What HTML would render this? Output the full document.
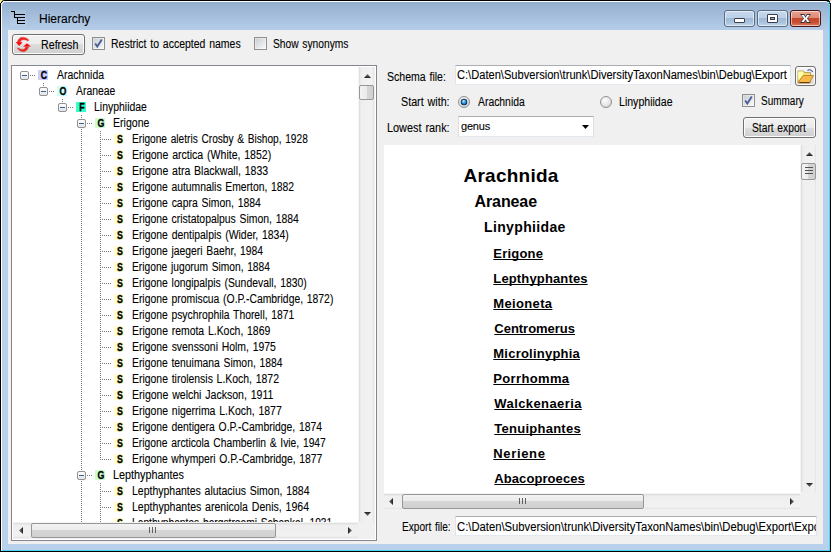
<!DOCTYPE html><html><head><meta charset="utf-8"><style>
*{margin:0;padding:0;box-sizing:border-box}
html,body{width:831px;height:552px;overflow:hidden;background:#000}
body{position:relative;font-family:"Liberation Sans", sans-serif;}
.a{position:absolute}
.t{position:absolute;white-space:pre;font-family:"Liberation Sans", sans-serif;color:#000;-webkit-text-stroke:0.1px #000}
.btn{position:absolute;border:1px solid #707070;border-radius:3px;background:linear-gradient(#f2f2f2 0%,#ebebeb 50%,#dddddd 50%,#cfcfcf 100%);box-shadow:inset 0 0 0 1px #fcfcfc}
.cb{position:absolute;width:13px;height:13px;border:1px solid #8e8f8f;background:linear-gradient(135deg,#dcdcdc,#fdfdfd)}
.cb i{position:absolute;left:1px;top:1px;width:9px;height:9px;background:linear-gradient(135deg,#cbcfd5,#f6f6f6);}
.tb{position:absolute;background:#fff;border:1px solid #e2e3ea;border-top-color:#abadb3;border-bottom-color:#e3e9ef}
.sbv{position:absolute;background:linear-gradient(90deg,#f4f4f4 0,#f4f4f4 1px,#e0e0e0 1px,#e0e0e0 2px,#e9e9e9 2px,#e9e9e9 3px,#efefef 3px,#f1f1f1 calc(100% - 3px),#e9e9e9 calc(100% - 2px),#e4e4e4 calc(100% - 1px),#f0f0f0 calc(100% - 1px))}
.sbh{position:absolute;background:linear-gradient(#f4f4f4 0,#f4f4f4 1px,#e0e0e0 1px,#e0e0e0 2px,#e9e9e9 2px,#e9e9e9 3px,#efefef 3px,#f1f1f1 calc(100% - 3px),#e9e9e9 calc(100% - 2px),#e4e4e4 calc(100% - 1px),#f0f0f0 calc(100% - 1px))}
.thv{position:absolute;border:1px solid #979797;border-radius:2px;background:linear-gradient(90deg,#f2f2f2,#ebebeb 50%,#d6d6d6 50%,#d0d0d0)}
.thh{position:absolute;border:1px solid #979797;border-radius:2px;background:linear-gradient(#f2f2f2,#ebebeb 50%,#d6d6d6 50%,#d0d0d0)}
</style></head><body><div class="a" style="left:1px;top:1px;width:829px;height:550px;border-top:1px solid #fff;border-left:1px solid #fff;border-right:1px solid #48d6f6;border-bottom:1px solid #48d6f6;border-radius:5px 5px 0 0;background:linear-gradient(#95afcf 0px,#b5cde8 28px,#b9d1ea 60px,#b9d1ea)"></div>
<div class="a" style="left:8px;top:30px;width:815px;height:514px;background:#f0f0f0"></div>
<svg class="a" style="left:0;top:0" width="5" height="5"><rect x="0" y="0" width="2" height="1" fill="#f4f088"/><rect x="0" y="1" width="1" height="2" fill="#f4f088"/><rect x="1" y="1" width="1" height="1" fill="#a0a060"/><rect x="2" y="0" width="1" height="1" fill="#808080"/><rect x="3" y="0" width="1" height="1" fill="#206060"/><rect x="2" y="1" width="1" height="1" fill="#101010"/><rect x="1" y="2" width="1" height="1" fill="#101010"/><rect x="3" y="1" width="2" height="1" fill="#f0f0f0"/><rect x="2" y="2" width="1" height="1" fill="#d8e4f0"/><rect x="1" y="3" width="1" height="2" fill="#f0f0f0"/></svg>
<svg class="a" style="left:826px;top:0" width="5" height="5"><rect x="3" y="0" width="2" height="1" fill="#c8c8c8"/><rect x="4" y="1" width="1" height="2" fill="#e8e8e8"/><rect x="1" y="1" width="1" height="1" fill="#1e4a50"/><rect x="2" y="1" width="1" height="1" fill="#102020"/><rect x="3" y="2" width="1" height="2" fill="#205858"/><rect x="2" y="2" width="1" height="1" fill="#c8f4fc"/><rect x="3" y="4" width="1" height="1" fill="#a8ecf8"/></svg>
<div class="a" style="left:10px;top:10px;width:16px;height:16px;background:rgba(255,255,255,0.1)"></div>
<svg class="a" style="left:0;top:0" width="40" height="30"><g fill="#000"><rect x="11" y="11" width="4" height="1"/><rect x="14" y="11" width="1" height="7"/><rect x="14" y="14" width="11" height="1"/><rect x="14" y="17" width="11" height="1"/><rect x="17" y="17" width="1" height="7"/><rect x="17" y="20" width="8" height="1"/><rect x="17" y="23" width="8" height="1"/></g></svg>
<div class="t" style="left:39.00px;top:9px;font-size:12px;line-height:20px;">Hierarchy</div>
<div class="a" style="left:724px;top:10px;width:31px;height:17px;border:1px solid #5b6b80;border-radius:3px;background:linear-gradient(#c6d8ec 0%,#bcd0e8 45%,#9fb8d6 50%,#a9c2de 75%,#c0d5ec 100%);box-shadow:inset 0 0 0 1px rgba(255,255,255,.55)"></div>
<div class="a" style="left:757px;top:10px;width:31px;height:17px;border:1px solid #5b6b80;border-radius:3px;background:linear-gradient(#c6d8ec 0%,#bcd0e8 45%,#9fb8d6 50%,#a9c2de 75%,#c0d5ec 100%);box-shadow:inset 0 0 0 1px rgba(255,255,255,.55)"></div>
<div class="a" style="left:790px;top:10px;width:31px;height:17px;border:1px solid #4a1510;border-radius:3px;background:linear-gradient(#e8a392 0%,#dc8a76 45%,#c5472c 50%,#c84f33 75%,#d87a5e 100%);box-shadow:inset 0 0 0 1px rgba(255,255,255,.55)"></div>
<div class="a" style="left:734px;top:18px;width:11px;height:5px;background:#fff;border:1px solid #3a3e48;border-radius:1px"></div>
<div class="a" style="left:767px;top:14px;width:11px;height:9px;background:#fff;border:1px solid #3a3e48;border-radius:1px"></div>
<div class="a" style="left:770px;top:17px;width:5px;height:3px;background:#8ea6c4;border:1px solid #3a3e48"></div>
<svg class="a" style="left:800px;top:14px" width="11" height="9" viewBox="0 0 11 9"><polygon points="0,0 4.2,0 5.5,2.3 6.8,0 11,0 7.7,4.5 11,9 6.8,9 5.5,6.7 4.2,9 0,9 3.3,4.5" fill="#2f3440"/><polygon points="1.3,1 3.9,1 5.5,3.7 7.1,1 9.7,1 7,4.5 9.7,8 7.1,8 5.5,5.3 3.9,8 1.3,8 4,4.5" fill="#fff"/></svg>
<div class="btn" style="left:12px;top:34px;width:73px;height:21px"></div>
<svg class="a" style="left:13px;top:35px" width="20" height="18" viewBox="0 0 20 18"><path d="M4.3 7.2 Q5.6 2.1 10 2.2 Q13.6 2.3 15.9 5.1 L15.1 5.9 Q12.6 4.5 10.1 4.7 Q7.6 5 7.1 7.4 Z" fill="#f52525" stroke="#c84030" stroke-width="0.4"/><path d="M2.6 6.9 L9.6 7.2 L6.2 10.9 Z" fill="#ff0d0d"/><path d="M4.1 13.3 Q7 16.9 10.5 16.7 Q14.2 16.4 15.6 11.8 L12.8 11.8 Q12 14.3 10 14.4 Q7 14.5 4.7 12.8 Z" fill="#f52525" stroke="#c84030" stroke-width="0.4"/><path d="M10 11.8 L17.9 11.6 L14 8.2 Z" fill="#ff0d0d"/></svg>
<div class="t" style="left:41.11px;top:35px;font-size:12px;line-height:20px;transform:scaleX(0.8900);transform-origin:0 0;">Refresh</div>
<div class="cb" style="left:92px;top:37px"><i></i></div>
<svg class="a" style="left:92px;top:37px" width="13" height="13"><path d="M3.2 6.5 L5.3 9.6 L9.8 2.6" fill="none" stroke="#4a5f97" stroke-width="1.9"/></svg>
<div class="t" style="left:111.13px;top:34px;font-size:12px;line-height:20px;word-spacing:1px;transform:scaleX(0.8735);transform-origin:0 0;">Restrict to accepted names</div>
<div class="cb" style="left:254px;top:37px"><i></i></div>
<div class="t" style="left:272.65px;top:34px;font-size:12px;line-height:20px;word-spacing:1px;transform:scaleX(0.8540);transform-origin:0 0;">Show synonyms</div>
<div class="a" style="left:11px;top:65px;width:366px;height:476px;background:#fff;border:1px solid #828790"></div>
<div class="a" style="left:13px;top:67px;width:346px;height:455px;overflow:hidden">
<div class="a" style="left:25px;top:3px;width:10px;height:10px;background:#ccccff"></div>
<div class="t" style="left:25.5px;top:0px;width:10px;text-align:center;font-size:11px;line-height:16px;font-weight:bold;-webkit-text-stroke:0.35px #000;transform:scaleX(0.8);transform-origin:50% 0">C</div>
<div class="t" style="left:43.50px;top:-2px;font-size:12px;line-height:20px;transform:scaleX(0.8704);transform-origin:0 0;">Arachnida</div>
<div class="a" style="left:7px;top:4px;width:9px;height:9px;border:1px solid #919191;border-radius:2px;background:linear-gradient(#fdfdfd,#e4e4e4)"></div>
<div class="a" style="left:9px;top:8px;width:5px;height:1px;background:#3c5da0"></div>
<div class="a" style="left:44px;top:19px;width:10px;height:10px;background:#ccffff"></div>
<div class="t" style="left:44.5px;top:16px;width:10px;text-align:center;font-size:11px;line-height:16px;font-weight:bold;-webkit-text-stroke:0.35px #000;transform:scaleX(0.8);transform-origin:50% 0">O</div>
<div class="t" style="left:62.50px;top:14px;font-size:12px;line-height:20px;transform:scaleX(0.8667);transform-origin:0 0;">Araneae</div>
<div class="a" style="left:26px;top:20px;width:9px;height:9px;border:1px solid #919191;border-radius:2px;background:linear-gradient(#fdfdfd,#e4e4e4)"></div>
<div class="a" style="left:28px;top:24px;width:5px;height:1px;background:#3c5da0"></div>
<div class="a" style="left:63px;top:35px;width:10px;height:10px;background:#33ffcc"></div>
<div class="t" style="left:63.5px;top:32px;width:10px;text-align:center;font-size:11px;line-height:16px;font-weight:bold;-webkit-text-stroke:0.35px #000;transform:scaleX(0.8);transform-origin:50% 0">F</div>
<div class="t" style="left:80.63px;top:30px;font-size:12px;line-height:20px;transform:scaleX(0.8712);transform-origin:0 0;">Linyphiidae</div>
<div class="a" style="left:45px;top:36px;width:9px;height:9px;border:1px solid #919191;border-radius:2px;background:linear-gradient(#fdfdfd,#e4e4e4)"></div>
<div class="a" style="left:47px;top:40px;width:5px;height:1px;background:#3c5da0"></div>
<div class="a" style="left:82px;top:51px;width:10px;height:10px;background:#ccffcc"></div>
<div class="t" style="left:82.5px;top:48px;width:10px;text-align:center;font-size:11px;line-height:16px;font-weight:bold;-webkit-text-stroke:0.35px #000;transform:scaleX(0.8);transform-origin:50% 0">G</div>
<div class="t" style="left:99.62px;top:46px;font-size:12px;line-height:20px;transform:scaleX(0.8800);transform-origin:0 0;">Erigone</div>
<div class="a" style="left:64px;top:52px;width:9px;height:9px;border:1px solid #919191;border-radius:2px;background:linear-gradient(#fdfdfd,#e4e4e4)"></div>
<div class="a" style="left:66px;top:56px;width:5px;height:1px;background:#3c5da0"></div>
<div class="a" style="left:101px;top:67px;width:10px;height:10px;background:#ffffcc"></div>
<div class="t" style="left:101.5px;top:64px;width:10px;text-align:center;font-size:11px;line-height:16px;font-weight:bold;-webkit-text-stroke:0.35px #000;transform:scaleX(0.8);transform-origin:50% 0">S</div>
<div class="t" style="left:118.65px;top:62px;font-size:12px;line-height:20px;word-spacing:1px;transform:scaleX(0.8461);transform-origin:0 0;">Erigone aletris Crosby &amp; Bishop, 1928</div>
<div class="a" style="left:101px;top:83px;width:10px;height:10px;background:#ffffcc"></div>
<div class="t" style="left:101.5px;top:80px;width:10px;text-align:center;font-size:11px;line-height:16px;font-weight:bold;-webkit-text-stroke:0.35px #000;transform:scaleX(0.8);transform-origin:50% 0">S</div>
<div class="t" style="left:118.62px;top:78px;font-size:12px;line-height:20px;word-spacing:1px;transform:scaleX(0.8790);transform-origin:0 0;">Erigone arctica (White, 1852)</div>
<div class="a" style="left:101px;top:99px;width:10px;height:10px;background:#ffffcc"></div>
<div class="t" style="left:101.5px;top:96px;width:10px;text-align:center;font-size:11px;line-height:16px;font-weight:bold;-webkit-text-stroke:0.35px #000;transform:scaleX(0.8);transform-origin:50% 0">S</div>
<div class="t" style="left:118.62px;top:94px;font-size:12px;line-height:20px;word-spacing:1px;transform:scaleX(0.8779);transform-origin:0 0;">Erigone atra Blackwall, 1833</div>
<div class="a" style="left:101px;top:115px;width:10px;height:10px;background:#ffffcc"></div>
<div class="t" style="left:101.5px;top:112px;width:10px;text-align:center;font-size:11px;line-height:16px;font-weight:bold;-webkit-text-stroke:0.35px #000;transform:scaleX(0.8);transform-origin:50% 0">S</div>
<div class="t" style="left:118.64px;top:110px;font-size:12px;line-height:20px;word-spacing:1px;transform:scaleX(0.8634);transform-origin:0 0;">Erigone autumnalis Emerton, 1882</div>
<div class="a" style="left:101px;top:131px;width:10px;height:10px;background:#ffffcc"></div>
<div class="t" style="left:101.5px;top:128px;width:10px;text-align:center;font-size:11px;line-height:16px;font-weight:bold;-webkit-text-stroke:0.35px #000;transform:scaleX(0.8);transform-origin:50% 0">S</div>
<div class="t" style="left:118.63px;top:126px;font-size:12px;line-height:20px;word-spacing:1px;transform:scaleX(0.8680);transform-origin:0 0;">Erigone capra Simon, 1884</div>
<div class="a" style="left:101px;top:147px;width:10px;height:10px;background:#ffffcc"></div>
<div class="t" style="left:101.5px;top:144px;width:10px;text-align:center;font-size:11px;line-height:16px;font-weight:bold;-webkit-text-stroke:0.35px #000;transform:scaleX(0.8);transform-origin:50% 0">S</div>
<div class="t" style="left:118.63px;top:142px;font-size:12px;line-height:20px;word-spacing:1px;transform:scaleX(0.8670);transform-origin:0 0;">Erigone cristatopalpus Simon, 1884</div>
<div class="a" style="left:101px;top:163px;width:10px;height:10px;background:#ffffcc"></div>
<div class="t" style="left:101.5px;top:160px;width:10px;text-align:center;font-size:11px;line-height:16px;font-weight:bold;-webkit-text-stroke:0.35px #000;transform:scaleX(0.8);transform-origin:50% 0">S</div>
<div class="t" style="left:118.63px;top:158px;font-size:12px;line-height:20px;word-spacing:1px;transform:scaleX(0.8682);transform-origin:0 0;">Erigone dentipalpis (Wider, 1834)</div>
<div class="a" style="left:101px;top:179px;width:10px;height:10px;background:#ffffcc"></div>
<div class="t" style="left:101.5px;top:176px;width:10px;text-align:center;font-size:11px;line-height:16px;font-weight:bold;-webkit-text-stroke:0.35px #000;transform:scaleX(0.8);transform-origin:50% 0">S</div>
<div class="t" style="left:118.64px;top:174px;font-size:12px;line-height:20px;word-spacing:1px;transform:scaleX(0.8636);transform-origin:0 0;">Erigone jaegeri Baehr, 1984</div>
<div class="a" style="left:101px;top:195px;width:10px;height:10px;background:#ffffcc"></div>
<div class="t" style="left:101.5px;top:192px;width:10px;text-align:center;font-size:11px;line-height:16px;font-weight:bold;-webkit-text-stroke:0.35px #000;transform:scaleX(0.8);transform-origin:50% 0">S</div>
<div class="t" style="left:118.65px;top:190px;font-size:12px;line-height:20px;word-spacing:1px;transform:scaleX(0.8528);transform-origin:0 0;">Erigone jugorum Simon, 1884</div>
<div class="a" style="left:101px;top:211px;width:10px;height:10px;background:#ffffcc"></div>
<div class="t" style="left:101.5px;top:208px;width:10px;text-align:center;font-size:11px;line-height:16px;font-weight:bold;-webkit-text-stroke:0.35px #000;transform:scaleX(0.8);transform-origin:50% 0">S</div>
<div class="t" style="left:118.63px;top:206px;font-size:12px;line-height:20px;word-spacing:1px;transform:scaleX(0.8660);transform-origin:0 0;">Erigone longipalpis (Sundevall, 1830)</div>
<div class="a" style="left:101px;top:227px;width:10px;height:10px;background:#ffffcc"></div>
<div class="t" style="left:101.5px;top:224px;width:10px;text-align:center;font-size:11px;line-height:16px;font-weight:bold;-webkit-text-stroke:0.35px #000;transform:scaleX(0.8);transform-origin:50% 0">S</div>
<div class="t" style="left:118.64px;top:222px;font-size:12px;line-height:20px;word-spacing:1px;transform:scaleX(0.8645);transform-origin:0 0;">Erigone promiscua (O.P.-Cambridge, 1872)</div>
<div class="a" style="left:101px;top:243px;width:10px;height:10px;background:#ffffcc"></div>
<div class="t" style="left:101.5px;top:240px;width:10px;text-align:center;font-size:11px;line-height:16px;font-weight:bold;-webkit-text-stroke:0.35px #000;transform:scaleX(0.8);transform-origin:50% 0">S</div>
<div class="t" style="left:118.64px;top:238px;font-size:12px;line-height:20px;word-spacing:1px;transform:scaleX(0.8626);transform-origin:0 0;">Erigone psychrophila Thorell, 1871</div>
<div class="a" style="left:101px;top:259px;width:10px;height:10px;background:#ffffcc"></div>
<div class="t" style="left:101.5px;top:256px;width:10px;text-align:center;font-size:11px;line-height:16px;font-weight:bold;-webkit-text-stroke:0.35px #000;transform:scaleX(0.8);transform-origin:50% 0">S</div>
<div class="t" style="left:118.63px;top:254px;font-size:12px;line-height:20px;word-spacing:1px;transform:scaleX(0.8690);transform-origin:0 0;">Erigone remota L.Koch, 1869</div>
<div class="a" style="left:101px;top:275px;width:10px;height:10px;background:#ffffcc"></div>
<div class="t" style="left:101.5px;top:272px;width:10px;text-align:center;font-size:11px;line-height:16px;font-weight:bold;-webkit-text-stroke:0.35px #000;transform:scaleX(0.8);transform-origin:50% 0">S</div>
<div class="t" style="left:118.63px;top:270px;font-size:12px;line-height:20px;word-spacing:1px;transform:scaleX(0.8677);transform-origin:0 0;">Erigone svenssoni Holm, 1975</div>
<div class="a" style="left:101px;top:291px;width:10px;height:10px;background:#ffffcc"></div>
<div class="t" style="left:101.5px;top:288px;width:10px;text-align:center;font-size:11px;line-height:16px;font-weight:bold;-webkit-text-stroke:0.35px #000;transform:scaleX(0.8);transform-origin:50% 0">S</div>
<div class="t" style="left:118.64px;top:286px;font-size:12px;line-height:20px;word-spacing:1px;transform:scaleX(0.8630);transform-origin:0 0;">Erigone tenuimana Simon, 1884</div>
<div class="a" style="left:101px;top:307px;width:10px;height:10px;background:#ffffcc"></div>
<div class="t" style="left:101.5px;top:304px;width:10px;text-align:center;font-size:11px;line-height:16px;font-weight:bold;-webkit-text-stroke:0.35px #000;transform:scaleX(0.8);transform-origin:50% 0">S</div>
<div class="t" style="left:118.63px;top:302px;font-size:12px;line-height:20px;word-spacing:1px;transform:scaleX(0.8690);transform-origin:0 0;">Erigone tirolensis L.Koch, 1872</div>
<div class="a" style="left:101px;top:323px;width:10px;height:10px;background:#ffffcc"></div>
<div class="t" style="left:101.5px;top:320px;width:10px;text-align:center;font-size:11px;line-height:16px;font-weight:bold;-webkit-text-stroke:0.35px #000;transform:scaleX(0.8);transform-origin:50% 0">S</div>
<div class="t" style="left:118.62px;top:318px;font-size:12px;line-height:20px;word-spacing:1px;transform:scaleX(0.8787);transform-origin:0 0;">Erigone welchi Jackson, 1911</div>
<div class="a" style="left:101px;top:339px;width:10px;height:10px;background:#ffffcc"></div>
<div class="t" style="left:101.5px;top:336px;width:10px;text-align:center;font-size:11px;line-height:16px;font-weight:bold;-webkit-text-stroke:0.35px #000;transform:scaleX(0.8);transform-origin:50% 0">S</div>
<div class="t" style="left:118.63px;top:334px;font-size:12px;line-height:20px;word-spacing:1px;transform:scaleX(0.8718);transform-origin:0 0;">Erigone nigerrima L.Koch, 1877</div>
<div class="a" style="left:101px;top:355px;width:10px;height:10px;background:#ffffcc"></div>
<div class="t" style="left:101.5px;top:352px;width:10px;text-align:center;font-size:11px;line-height:16px;font-weight:bold;-webkit-text-stroke:0.35px #000;transform:scaleX(0.8);transform-origin:50% 0">S</div>
<div class="t" style="left:118.63px;top:350px;font-size:12px;line-height:20px;word-spacing:1px;transform:scaleX(0.8653);transform-origin:0 0;">Erigone dentigera O.P.-Cambridge, 1874</div>
<div class="a" style="left:101px;top:371px;width:10px;height:10px;background:#ffffcc"></div>
<div class="t" style="left:101.5px;top:368px;width:10px;text-align:center;font-size:11px;line-height:16px;font-weight:bold;-webkit-text-stroke:0.35px #000;transform:scaleX(0.8);transform-origin:50% 0">S</div>
<div class="t" style="left:118.64px;top:366px;font-size:12px;line-height:20px;word-spacing:1px;transform:scaleX(0.8585);transform-origin:0 0;">Erigone arcticola Chamberlin &amp; Ivie, 1947</div>
<div class="a" style="left:101px;top:387px;width:10px;height:10px;background:#ffffcc"></div>
<div class="t" style="left:101.5px;top:384px;width:10px;text-align:center;font-size:11px;line-height:16px;font-weight:bold;-webkit-text-stroke:0.35px #000;transform:scaleX(0.8);transform-origin:50% 0">S</div>
<div class="t" style="left:118.64px;top:382px;font-size:12px;line-height:20px;word-spacing:1px;transform:scaleX(0.8614);transform-origin:0 0;">Erigone whymperi O.P.-Cambridge, 1877</div>
<div class="a" style="left:82px;top:403px;width:10px;height:10px;background:#ccffcc"></div>
<div class="t" style="left:82.5px;top:400px;width:10px;text-align:center;font-size:11px;line-height:16px;font-weight:bold;-webkit-text-stroke:0.35px #000;transform:scaleX(0.8);transform-origin:50% 0">G</div>
<div class="t" style="left:99.60px;top:398px;font-size:12px;line-height:20px;transform:scaleX(0.9000);transform-origin:0 0;">Lepthyphantes</div>
<div class="a" style="left:64px;top:404px;width:9px;height:9px;border:1px solid #919191;border-radius:2px;background:linear-gradient(#fdfdfd,#e4e4e4)"></div>
<div class="a" style="left:66px;top:408px;width:5px;height:1px;background:#3c5da0"></div>
<div class="a" style="left:101px;top:419px;width:10px;height:10px;background:#ffffcc"></div>
<div class="t" style="left:101.5px;top:416px;width:10px;text-align:center;font-size:11px;line-height:16px;font-weight:bold;-webkit-text-stroke:0.35px #000;transform:scaleX(0.8);transform-origin:50% 0">S</div>
<div class="t" style="left:118.63px;top:414px;font-size:12px;line-height:20px;word-spacing:1px;transform:scaleX(0.8738);transform-origin:0 0;">Lepthyphantes alutacius Simon, 1884</div>
<div class="a" style="left:101px;top:435px;width:10px;height:10px;background:#ffffcc"></div>
<div class="t" style="left:101.5px;top:432px;width:10px;text-align:center;font-size:11px;line-height:16px;font-weight:bold;-webkit-text-stroke:0.35px #000;transform:scaleX(0.8);transform-origin:50% 0">S</div>
<div class="t" style="left:118.62px;top:430px;font-size:12px;line-height:20px;word-spacing:1px;transform:scaleX(0.8800);transform-origin:0 0;">Lepthyphantes arenicola Denis, 1964</div>
<div class="a" style="left:101px;top:451px;width:10px;height:10px;background:#ffffcc"></div>
<div class="t" style="left:101.5px;top:448px;width:10px;text-align:center;font-size:11px;line-height:16px;font-weight:bold;-webkit-text-stroke:0.35px #000;transform:scaleX(0.8);transform-origin:50% 0">S</div>
<div class="t" style="left:118.65px;top:446px;font-size:12px;line-height:20px;word-spacing:1px;transform:scaleX(0.8541);transform-origin:0 0;">Lepthyphantes bergstroemi Schenkel, 1931</div>
<svg class="a" style="left:0;top:0" width="346" height="470"><g fill="#767676"><rect x="17" y="8" width="1" height="1"/><rect x="19" y="8" width="1" height="1"/><rect x="21" y="8" width="1" height="1"/><rect x="30" y="16" width="1" height="1"/><rect x="30" y="18" width="1" height="1"/><rect x="36" y="24" width="1" height="1"/><rect x="38" y="24" width="1" height="1"/><rect x="40" y="24" width="1" height="1"/><rect x="49" y="32" width="1" height="1"/><rect x="49" y="34" width="1" height="1"/><rect x="55" y="40" width="1" height="1"/><rect x="57" y="40" width="1" height="1"/><rect x="59" y="40" width="1" height="1"/><rect x="68" y="48" width="1" height="1"/><rect x="68" y="50" width="1" height="1"/><rect x="68" y="62" width="1" height="1"/><rect x="68" y="64" width="1" height="1"/><rect x="68" y="66" width="1" height="1"/><rect x="68" y="68" width="1" height="1"/><rect x="68" y="70" width="1" height="1"/><rect x="68" y="72" width="1" height="1"/><rect x="68" y="74" width="1" height="1"/><rect x="68" y="76" width="1" height="1"/><rect x="68" y="78" width="1" height="1"/><rect x="68" y="80" width="1" height="1"/><rect x="68" y="82" width="1" height="1"/><rect x="68" y="84" width="1" height="1"/><rect x="68" y="86" width="1" height="1"/><rect x="68" y="88" width="1" height="1"/><rect x="68" y="90" width="1" height="1"/><rect x="68" y="92" width="1" height="1"/><rect x="68" y="94" width="1" height="1"/><rect x="68" y="96" width="1" height="1"/><rect x="68" y="98" width="1" height="1"/><rect x="68" y="100" width="1" height="1"/><rect x="68" y="102" width="1" height="1"/><rect x="68" y="104" width="1" height="1"/><rect x="68" y="106" width="1" height="1"/><rect x="68" y="108" width="1" height="1"/><rect x="68" y="110" width="1" height="1"/><rect x="68" y="112" width="1" height="1"/><rect x="68" y="114" width="1" height="1"/><rect x="68" y="116" width="1" height="1"/><rect x="68" y="118" width="1" height="1"/><rect x="68" y="120" width="1" height="1"/><rect x="68" y="122" width="1" height="1"/><rect x="68" y="124" width="1" height="1"/><rect x="68" y="126" width="1" height="1"/><rect x="68" y="128" width="1" height="1"/><rect x="68" y="130" width="1" height="1"/><rect x="68" y="132" width="1" height="1"/><rect x="68" y="134" width="1" height="1"/><rect x="68" y="136" width="1" height="1"/><rect x="68" y="138" width="1" height="1"/><rect x="68" y="140" width="1" height="1"/><rect x="68" y="142" width="1" height="1"/><rect x="68" y="144" width="1" height="1"/><rect x="68" y="146" width="1" height="1"/><rect x="68" y="148" width="1" height="1"/><rect x="68" y="150" width="1" height="1"/><rect x="68" y="152" width="1" height="1"/><rect x="68" y="154" width="1" height="1"/><rect x="68" y="156" width="1" height="1"/><rect x="68" y="158" width="1" height="1"/><rect x="68" y="160" width="1" height="1"/><rect x="68" y="162" width="1" height="1"/><rect x="68" y="164" width="1" height="1"/><rect x="68" y="166" width="1" height="1"/><rect x="68" y="168" width="1" height="1"/><rect x="68" y="170" width="1" height="1"/><rect x="68" y="172" width="1" height="1"/><rect x="68" y="174" width="1" height="1"/><rect x="68" y="176" width="1" height="1"/><rect x="68" y="178" width="1" height="1"/><rect x="68" y="180" width="1" height="1"/><rect x="68" y="182" width="1" height="1"/><rect x="68" y="184" width="1" height="1"/><rect x="68" y="186" width="1" height="1"/><rect x="68" y="188" width="1" height="1"/><rect x="68" y="190" width="1" height="1"/><rect x="68" y="192" width="1" height="1"/><rect x="68" y="194" width="1" height="1"/><rect x="68" y="196" width="1" height="1"/><rect x="68" y="198" width="1" height="1"/><rect x="68" y="200" width="1" height="1"/><rect x="68" y="202" width="1" height="1"/><rect x="68" y="204" width="1" height="1"/><rect x="68" y="206" width="1" height="1"/><rect x="68" y="208" width="1" height="1"/><rect x="68" y="210" width="1" height="1"/><rect x="68" y="212" width="1" height="1"/><rect x="68" y="214" width="1" height="1"/><rect x="68" y="216" width="1" height="1"/><rect x="68" y="218" width="1" height="1"/><rect x="68" y="220" width="1" height="1"/><rect x="68" y="222" width="1" height="1"/><rect x="68" y="224" width="1" height="1"/><rect x="68" y="226" width="1" height="1"/><rect x="68" y="228" width="1" height="1"/><rect x="68" y="230" width="1" height="1"/><rect x="68" y="232" width="1" height="1"/><rect x="68" y="234" width="1" height="1"/><rect x="68" y="236" width="1" height="1"/><rect x="68" y="238" width="1" height="1"/><rect x="68" y="240" width="1" height="1"/><rect x="68" y="242" width="1" height="1"/><rect x="68" y="244" width="1" height="1"/><rect x="68" y="246" width="1" height="1"/><rect x="68" y="248" width="1" height="1"/><rect x="68" y="250" width="1" height="1"/><rect x="68" y="252" width="1" height="1"/><rect x="68" y="254" width="1" height="1"/><rect x="68" y="256" width="1" height="1"/><rect x="68" y="258" width="1" height="1"/><rect x="68" y="260" width="1" height="1"/><rect x="68" y="262" width="1" height="1"/><rect x="68" y="264" width="1" height="1"/><rect x="68" y="266" width="1" height="1"/><rect x="68" y="268" width="1" height="1"/><rect x="68" y="270" width="1" height="1"/><rect x="68" y="272" width="1" height="1"/><rect x="68" y="274" width="1" height="1"/><rect x="68" y="276" width="1" height="1"/><rect x="68" y="278" width="1" height="1"/><rect x="68" y="280" width="1" height="1"/><rect x="68" y="282" width="1" height="1"/><rect x="68" y="284" width="1" height="1"/><rect x="68" y="286" width="1" height="1"/><rect x="68" y="288" width="1" height="1"/><rect x="68" y="290" width="1" height="1"/><rect x="68" y="292" width="1" height="1"/><rect x="68" y="294" width="1" height="1"/><rect x="68" y="296" width="1" height="1"/><rect x="68" y="298" width="1" height="1"/><rect x="68" y="300" width="1" height="1"/><rect x="68" y="302" width="1" height="1"/><rect x="68" y="304" width="1" height="1"/><rect x="68" y="306" width="1" height="1"/><rect x="68" y="308" width="1" height="1"/><rect x="68" y="310" width="1" height="1"/><rect x="68" y="312" width="1" height="1"/><rect x="68" y="314" width="1" height="1"/><rect x="68" y="316" width="1" height="1"/><rect x="68" y="318" width="1" height="1"/><rect x="68" y="320" width="1" height="1"/><rect x="68" y="322" width="1" height="1"/><rect x="68" y="324" width="1" height="1"/><rect x="68" y="326" width="1" height="1"/><rect x="68" y="328" width="1" height="1"/><rect x="68" y="330" width="1" height="1"/><rect x="68" y="332" width="1" height="1"/><rect x="68" y="334" width="1" height="1"/><rect x="68" y="336" width="1" height="1"/><rect x="68" y="338" width="1" height="1"/><rect x="68" y="340" width="1" height="1"/><rect x="68" y="342" width="1" height="1"/><rect x="68" y="344" width="1" height="1"/><rect x="68" y="346" width="1" height="1"/><rect x="68" y="348" width="1" height="1"/><rect x="68" y="350" width="1" height="1"/><rect x="68" y="352" width="1" height="1"/><rect x="68" y="354" width="1" height="1"/><rect x="68" y="356" width="1" height="1"/><rect x="68" y="358" width="1" height="1"/><rect x="68" y="360" width="1" height="1"/><rect x="68" y="362" width="1" height="1"/><rect x="68" y="364" width="1" height="1"/><rect x="68" y="366" width="1" height="1"/><rect x="68" y="368" width="1" height="1"/><rect x="68" y="370" width="1" height="1"/><rect x="68" y="372" width="1" height="1"/><rect x="68" y="374" width="1" height="1"/><rect x="68" y="376" width="1" height="1"/><rect x="68" y="378" width="1" height="1"/><rect x="68" y="380" width="1" height="1"/><rect x="68" y="382" width="1" height="1"/><rect x="68" y="384" width="1" height="1"/><rect x="68" y="386" width="1" height="1"/><rect x="68" y="388" width="1" height="1"/><rect x="68" y="390" width="1" height="1"/><rect x="68" y="392" width="1" height="1"/><rect x="68" y="394" width="1" height="1"/><rect x="68" y="396" width="1" height="1"/><rect x="68" y="398" width="1" height="1"/><rect x="68" y="400" width="1" height="1"/><rect x="68" y="402" width="1" height="1"/><rect x="68" y="414" width="1" height="1"/><rect x="68" y="416" width="1" height="1"/><rect x="68" y="418" width="1" height="1"/><rect x="68" y="420" width="1" height="1"/><rect x="68" y="422" width="1" height="1"/><rect x="68" y="424" width="1" height="1"/><rect x="68" y="426" width="1" height="1"/><rect x="68" y="428" width="1" height="1"/><rect x="68" y="430" width="1" height="1"/><rect x="68" y="432" width="1" height="1"/><rect x="68" y="434" width="1" height="1"/><rect x="68" y="436" width="1" height="1"/><rect x="68" y="438" width="1" height="1"/><rect x="68" y="440" width="1" height="1"/><rect x="68" y="442" width="1" height="1"/><rect x="68" y="444" width="1" height="1"/><rect x="68" y="446" width="1" height="1"/><rect x="68" y="448" width="1" height="1"/><rect x="68" y="450" width="1" height="1"/><rect x="68" y="452" width="1" height="1"/><rect x="68" y="454" width="1" height="1"/><rect x="68" y="456" width="1" height="1"/><rect x="68" y="458" width="1" height="1"/><rect x="68" y="460" width="1" height="1"/><rect x="68" y="462" width="1" height="1"/><rect x="74" y="56" width="1" height="1"/><rect x="74" y="408" width="1" height="1"/><rect x="76" y="56" width="1" height="1"/><rect x="76" y="408" width="1" height="1"/><rect x="78" y="56" width="1" height="1"/><rect x="78" y="408" width="1" height="1"/><rect x="87" y="64" width="1" height="1"/><rect x="87" y="66" width="1" height="1"/><rect x="87" y="68" width="1" height="1"/><rect x="87" y="70" width="1" height="1"/><rect x="87" y="72" width="1" height="1"/><rect x="87" y="74" width="1" height="1"/><rect x="87" y="76" width="1" height="1"/><rect x="87" y="78" width="1" height="1"/><rect x="87" y="80" width="1" height="1"/><rect x="87" y="82" width="1" height="1"/><rect x="87" y="84" width="1" height="1"/><rect x="87" y="86" width="1" height="1"/><rect x="87" y="88" width="1" height="1"/><rect x="87" y="90" width="1" height="1"/><rect x="87" y="92" width="1" height="1"/><rect x="87" y="94" width="1" height="1"/><rect x="87" y="96" width="1" height="1"/><rect x="87" y="98" width="1" height="1"/><rect x="87" y="100" width="1" height="1"/><rect x="87" y="102" width="1" height="1"/><rect x="87" y="104" width="1" height="1"/><rect x="87" y="106" width="1" height="1"/><rect x="87" y="108" width="1" height="1"/><rect x="87" y="110" width="1" height="1"/><rect x="87" y="112" width="1" height="1"/><rect x="87" y="114" width="1" height="1"/><rect x="87" y="116" width="1" height="1"/><rect x="87" y="118" width="1" height="1"/><rect x="87" y="120" width="1" height="1"/><rect x="87" y="122" width="1" height="1"/><rect x="87" y="124" width="1" height="1"/><rect x="87" y="126" width="1" height="1"/><rect x="87" y="128" width="1" height="1"/><rect x="87" y="130" width="1" height="1"/><rect x="87" y="132" width="1" height="1"/><rect x="87" y="134" width="1" height="1"/><rect x="87" y="136" width="1" height="1"/><rect x="87" y="138" width="1" height="1"/><rect x="87" y="140" width="1" height="1"/><rect x="87" y="142" width="1" height="1"/><rect x="87" y="144" width="1" height="1"/><rect x="87" y="146" width="1" height="1"/><rect x="87" y="148" width="1" height="1"/><rect x="87" y="150" width="1" height="1"/><rect x="87" y="152" width="1" height="1"/><rect x="87" y="154" width="1" height="1"/><rect x="87" y="156" width="1" height="1"/><rect x="87" y="158" width="1" height="1"/><rect x="87" y="160" width="1" height="1"/><rect x="87" y="162" width="1" height="1"/><rect x="87" y="164" width="1" height="1"/><rect x="87" y="166" width="1" height="1"/><rect x="87" y="168" width="1" height="1"/><rect x="87" y="170" width="1" height="1"/><rect x="87" y="172" width="1" height="1"/><rect x="87" y="174" width="1" height="1"/><rect x="87" y="176" width="1" height="1"/><rect x="87" y="178" width="1" height="1"/><rect x="87" y="180" width="1" height="1"/><rect x="87" y="182" width="1" height="1"/><rect x="87" y="184" width="1" height="1"/><rect x="87" y="186" width="1" height="1"/><rect x="87" y="188" width="1" height="1"/><rect x="87" y="190" width="1" height="1"/><rect x="87" y="192" width="1" height="1"/><rect x="87" y="194" width="1" height="1"/><rect x="87" y="196" width="1" height="1"/><rect x="87" y="198" width="1" height="1"/><rect x="87" y="200" width="1" height="1"/><rect x="87" y="202" width="1" height="1"/><rect x="87" y="204" width="1" height="1"/><rect x="87" y="206" width="1" height="1"/><rect x="87" y="208" width="1" height="1"/><rect x="87" y="210" width="1" height="1"/><rect x="87" y="212" width="1" height="1"/><rect x="87" y="214" width="1" height="1"/><rect x="87" y="216" width="1" height="1"/><rect x="87" y="218" width="1" height="1"/><rect x="87" y="220" width="1" height="1"/><rect x="87" y="222" width="1" height="1"/><rect x="87" y="224" width="1" height="1"/><rect x="87" y="226" width="1" height="1"/><rect x="87" y="228" width="1" height="1"/><rect x="87" y="230" width="1" height="1"/><rect x="87" y="232" width="1" height="1"/><rect x="87" y="234" width="1" height="1"/><rect x="87" y="236" width="1" height="1"/><rect x="87" y="238" width="1" height="1"/><rect x="87" y="240" width="1" height="1"/><rect x="87" y="242" width="1" height="1"/><rect x="87" y="244" width="1" height="1"/><rect x="87" y="246" width="1" height="1"/><rect x="87" y="248" width="1" height="1"/><rect x="87" y="250" width="1" height="1"/><rect x="87" y="252" width="1" height="1"/><rect x="87" y="254" width="1" height="1"/><rect x="87" y="256" width="1" height="1"/><rect x="87" y="258" width="1" height="1"/><rect x="87" y="260" width="1" height="1"/><rect x="87" y="262" width="1" height="1"/><rect x="87" y="264" width="1" height="1"/><rect x="87" y="266" width="1" height="1"/><rect x="87" y="268" width="1" height="1"/><rect x="87" y="270" width="1" height="1"/><rect x="87" y="272" width="1" height="1"/><rect x="87" y="274" width="1" height="1"/><rect x="87" y="276" width="1" height="1"/><rect x="87" y="278" width="1" height="1"/><rect x="87" y="280" width="1" height="1"/><rect x="87" y="282" width="1" height="1"/><rect x="87" y="284" width="1" height="1"/><rect x="87" y="286" width="1" height="1"/><rect x="87" y="288" width="1" height="1"/><rect x="87" y="290" width="1" height="1"/><rect x="87" y="292" width="1" height="1"/><rect x="87" y="294" width="1" height="1"/><rect x="87" y="296" width="1" height="1"/><rect x="87" y="298" width="1" height="1"/><rect x="87" y="300" width="1" height="1"/><rect x="87" y="302" width="1" height="1"/><rect x="87" y="304" width="1" height="1"/><rect x="87" y="306" width="1" height="1"/><rect x="87" y="308" width="1" height="1"/><rect x="87" y="310" width="1" height="1"/><rect x="87" y="312" width="1" height="1"/><rect x="87" y="314" width="1" height="1"/><rect x="87" y="316" width="1" height="1"/><rect x="87" y="318" width="1" height="1"/><rect x="87" y="320" width="1" height="1"/><rect x="87" y="322" width="1" height="1"/><rect x="87" y="324" width="1" height="1"/><rect x="87" y="326" width="1" height="1"/><rect x="87" y="328" width="1" height="1"/><rect x="87" y="330" width="1" height="1"/><rect x="87" y="332" width="1" height="1"/><rect x="87" y="334" width="1" height="1"/><rect x="87" y="336" width="1" height="1"/><rect x="87" y="338" width="1" height="1"/><rect x="87" y="340" width="1" height="1"/><rect x="87" y="342" width="1" height="1"/><rect x="87" y="344" width="1" height="1"/><rect x="87" y="346" width="1" height="1"/><rect x="87" y="348" width="1" height="1"/><rect x="87" y="350" width="1" height="1"/><rect x="87" y="352" width="1" height="1"/><rect x="87" y="354" width="1" height="1"/><rect x="87" y="356" width="1" height="1"/><rect x="87" y="358" width="1" height="1"/><rect x="87" y="360" width="1" height="1"/><rect x="87" y="362" width="1" height="1"/><rect x="87" y="364" width="1" height="1"/><rect x="87" y="366" width="1" height="1"/><rect x="87" y="368" width="1" height="1"/><rect x="87" y="370" width="1" height="1"/><rect x="87" y="372" width="1" height="1"/><rect x="87" y="374" width="1" height="1"/><rect x="87" y="376" width="1" height="1"/><rect x="87" y="378" width="1" height="1"/><rect x="87" y="380" width="1" height="1"/><rect x="87" y="382" width="1" height="1"/><rect x="87" y="384" width="1" height="1"/><rect x="87" y="386" width="1" height="1"/><rect x="87" y="388" width="1" height="1"/><rect x="87" y="390" width="1" height="1"/><rect x="87" y="392" width="1" height="1"/><rect x="87" y="416" width="1" height="1"/><rect x="87" y="418" width="1" height="1"/><rect x="87" y="420" width="1" height="1"/><rect x="87" y="422" width="1" height="1"/><rect x="87" y="424" width="1" height="1"/><rect x="87" y="426" width="1" height="1"/><rect x="87" y="428" width="1" height="1"/><rect x="87" y="430" width="1" height="1"/><rect x="87" y="432" width="1" height="1"/><rect x="87" y="434" width="1" height="1"/><rect x="87" y="436" width="1" height="1"/><rect x="87" y="438" width="1" height="1"/><rect x="87" y="440" width="1" height="1"/><rect x="87" y="442" width="1" height="1"/><rect x="87" y="444" width="1" height="1"/><rect x="87" y="446" width="1" height="1"/><rect x="87" y="448" width="1" height="1"/><rect x="87" y="450" width="1" height="1"/><rect x="87" y="452" width="1" height="1"/><rect x="87" y="454" width="1" height="1"/><rect x="87" y="456" width="1" height="1"/><rect x="87" y="458" width="1" height="1"/><rect x="87" y="460" width="1" height="1"/><rect x="87" y="462" width="1" height="1"/><rect x="89" y="72" width="1" height="1"/><rect x="89" y="88" width="1" height="1"/><rect x="89" y="104" width="1" height="1"/><rect x="89" y="120" width="1" height="1"/><rect x="89" y="136" width="1" height="1"/><rect x="89" y="152" width="1" height="1"/><rect x="89" y="168" width="1" height="1"/><rect x="89" y="184" width="1" height="1"/><rect x="89" y="200" width="1" height="1"/><rect x="89" y="216" width="1" height="1"/><rect x="89" y="232" width="1" height="1"/><rect x="89" y="248" width="1" height="1"/><rect x="89" y="264" width="1" height="1"/><rect x="89" y="280" width="1" height="1"/><rect x="89" y="296" width="1" height="1"/><rect x="89" y="312" width="1" height="1"/><rect x="89" y="328" width="1" height="1"/><rect x="89" y="344" width="1" height="1"/><rect x="89" y="360" width="1" height="1"/><rect x="89" y="376" width="1" height="1"/><rect x="89" y="392" width="1" height="1"/><rect x="89" y="424" width="1" height="1"/><rect x="89" y="440" width="1" height="1"/><rect x="89" y="456" width="1" height="1"/><rect x="91" y="72" width="1" height="1"/><rect x="91" y="88" width="1" height="1"/><rect x="91" y="104" width="1" height="1"/><rect x="91" y="120" width="1" height="1"/><rect x="91" y="136" width="1" height="1"/><rect x="91" y="152" width="1" height="1"/><rect x="91" y="168" width="1" height="1"/><rect x="91" y="184" width="1" height="1"/><rect x="91" y="200" width="1" height="1"/><rect x="91" y="216" width="1" height="1"/><rect x="91" y="232" width="1" height="1"/><rect x="91" y="248" width="1" height="1"/><rect x="91" y="264" width="1" height="1"/><rect x="91" y="280" width="1" height="1"/><rect x="91" y="296" width="1" height="1"/><rect x="91" y="312" width="1" height="1"/><rect x="91" y="328" width="1" height="1"/><rect x="91" y="344" width="1" height="1"/><rect x="91" y="360" width="1" height="1"/><rect x="91" y="376" width="1" height="1"/><rect x="91" y="392" width="1" height="1"/><rect x="91" y="424" width="1" height="1"/><rect x="91" y="440" width="1" height="1"/><rect x="91" y="456" width="1" height="1"/><rect x="93" y="72" width="1" height="1"/><rect x="93" y="88" width="1" height="1"/><rect x="93" y="104" width="1" height="1"/><rect x="93" y="120" width="1" height="1"/><rect x="93" y="136" width="1" height="1"/><rect x="93" y="152" width="1" height="1"/><rect x="93" y="168" width="1" height="1"/><rect x="93" y="184" width="1" height="1"/><rect x="93" y="200" width="1" height="1"/><rect x="93" y="216" width="1" height="1"/><rect x="93" y="232" width="1" height="1"/><rect x="93" y="248" width="1" height="1"/><rect x="93" y="264" width="1" height="1"/><rect x="93" y="280" width="1" height="1"/><rect x="93" y="296" width="1" height="1"/><rect x="93" y="312" width="1" height="1"/><rect x="93" y="328" width="1" height="1"/><rect x="93" y="344" width="1" height="1"/><rect x="93" y="360" width="1" height="1"/><rect x="93" y="376" width="1" height="1"/><rect x="93" y="392" width="1" height="1"/><rect x="93" y="424" width="1" height="1"/><rect x="93" y="440" width="1" height="1"/><rect x="93" y="456" width="1" height="1"/><rect x="95" y="72" width="1" height="1"/><rect x="95" y="88" width="1" height="1"/><rect x="95" y="104" width="1" height="1"/><rect x="95" y="120" width="1" height="1"/><rect x="95" y="136" width="1" height="1"/><rect x="95" y="152" width="1" height="1"/><rect x="95" y="168" width="1" height="1"/><rect x="95" y="184" width="1" height="1"/><rect x="95" y="200" width="1" height="1"/><rect x="95" y="216" width="1" height="1"/><rect x="95" y="232" width="1" height="1"/><rect x="95" y="248" width="1" height="1"/><rect x="95" y="264" width="1" height="1"/><rect x="95" y="280" width="1" height="1"/><rect x="95" y="296" width="1" height="1"/><rect x="95" y="312" width="1" height="1"/><rect x="95" y="328" width="1" height="1"/><rect x="95" y="344" width="1" height="1"/><rect x="95" y="360" width="1" height="1"/><rect x="95" y="376" width="1" height="1"/><rect x="95" y="392" width="1" height="1"/><rect x="95" y="424" width="1" height="1"/><rect x="95" y="440" width="1" height="1"/><rect x="95" y="456" width="1" height="1"/><rect x="97" y="72" width="1" height="1"/><rect x="97" y="88" width="1" height="1"/><rect x="97" y="104" width="1" height="1"/><rect x="97" y="120" width="1" height="1"/><rect x="97" y="136" width="1" height="1"/><rect x="97" y="152" width="1" height="1"/><rect x="97" y="168" width="1" height="1"/><rect x="97" y="184" width="1" height="1"/><rect x="97" y="200" width="1" height="1"/><rect x="97" y="216" width="1" height="1"/><rect x="97" y="232" width="1" height="1"/><rect x="97" y="248" width="1" height="1"/><rect x="97" y="264" width="1" height="1"/><rect x="97" y="280" width="1" height="1"/><rect x="97" y="296" width="1" height="1"/><rect x="97" y="312" width="1" height="1"/><rect x="97" y="328" width="1" height="1"/><rect x="97" y="344" width="1" height="1"/><rect x="97" y="360" width="1" height="1"/><rect x="97" y="376" width="1" height="1"/><rect x="97" y="392" width="1" height="1"/><rect x="97" y="424" width="1" height="1"/><rect x="97" y="440" width="1" height="1"/><rect x="97" y="456" width="1" height="1"/></g></svg>
</div>
<div class="sbv" style="left:358px;top:67px;width:17px;height:455px"></div>
<div class="thv" style="left:359px;top:85px;width:15px;height:15px"></div>
<div class="sbh" style="left:13px;top:522px;width:345px;height:17px"></div>
<div class="thh" style="left:31px;top:523px;width:245px;height:15px"></div>
<div class="a" style="left:358px;top:522px;width:17px;height:17px;background:#f0f0f0"></div>
<svg class="a" style="left:0;top:0;overflow:visible" width="1" height="1"><defs><linearGradient id="ag1" x1="0" y1="1" x2="0" y2="0"><stop offset="0" stop-color="#1e1e1e"/><stop offset="1" stop-color="#7a7a7a"/></linearGradient></defs><polygon points="364,78 371,78 367.5,74" fill="url(#ag1)"/></svg>
<svg class="a" style="left:0;top:0;overflow:visible" width="1" height="1"><defs><linearGradient id="ag2" x1="0" y1="0" x2="0" y2="1"><stop offset="0" stop-color="#1e1e1e"/><stop offset="1" stop-color="#7a7a7a"/></linearGradient></defs><polygon points="364,512 371,512 367.5,516" fill="url(#ag2)"/></svg>
<svg class="a" style="left:0;top:0;overflow:visible" width="1" height="1"><defs><linearGradient id="ag3" x1="1" y1="0" x2="0" y2="0"><stop offset="0" stop-color="#1e1e1e"/><stop offset="1" stop-color="#7a7a7a"/></linearGradient></defs><polygon points="23,527 23,534 19,530.5" fill="url(#ag3)"/></svg>
<svg class="a" style="left:0;top:0;overflow:visible" width="1" height="1"><defs><linearGradient id="ag4" x1="0" y1="0" x2="1" y2="0"><stop offset="0" stop-color="#1e1e1e"/><stop offset="1" stop-color="#7a7a7a"/></linearGradient></defs><polygon points="348,527 348,534 352,530.5" fill="url(#ag4)"/></svg>
<div class="a" style="left:149px;top:527px;width:1px;height:6px;background:#606060"></div>
<div class="a" style="left:152px;top:527px;width:1px;height:6px;background:#606060"></div>
<div class="a" style="left:155px;top:527px;width:1px;height:6px;background:#606060"></div>
<div class="t" style="left:386.62px;top:67px;font-size:12px;line-height:20px;word-spacing:1px;transform:scaleX(0.8785);transform-origin:0 0;">Schema file:</div>
<div class="tb" style="left:455px;top:65px;width:336px;height:20px"></div>
<div class="a" style="left:456px;top:66px;width:334px;height:18px;overflow:hidden">
<div class="t" style="left:1.07px;top:-1px;font-size:12px;line-height:20px;transform:scaleX(0.9259);transform-origin:0 0;">C:\Daten\Subversion\trunk\DiversityTaxonNames\bin\Debug\Export</div>
</div>
<div class="btn" style="left:795px;top:66px;width:21px;height:20px;background:linear-gradient(#f6f6f6,#ececec 50%,#e4e4e4 50%,#dcdcdc)"></div>
<svg class="a" style="left:795px;top:66px" width="21" height="20" viewBox="0 0 21 20"><path d="M3 5 L8.5 5 L9.5 6.5 L15.5 6.5 L15.5 16.7 L3 16.7 Z" fill="#f4e070" stroke="#a89048" stroke-width="0.8"/><path d="M3.2 5.6 L8 5.6 L8 10 L3.2 14 Z" fill="#ffffa8"/><path d="M8 9.5 L18.5 9.5 L14.5 16.8 L3 16.8 Z" fill="#f8b848" stroke="#b07820" stroke-width="0.8"/><path d="M4.5 16.6 L14.3 16.6" stroke="#5a3a10" stroke-width="1"/><path d="M12.5 4.6 Q14.5 2.4 17.8 5.8" fill="none" stroke="#4050a0" stroke-width="1.1"/></svg>
<div class="t" style="left:400.61px;top:92px;font-size:12px;line-height:20px;word-spacing:1px;transform:scaleX(0.8942);transform-origin:0 0;">Start with:</div>
<svg class="a" style="left:458px;top:96px" width="12" height="12"><defs><radialGradient id="rb1" cx="40%" cy="35%" r="70%"><stop offset="0" stop-color="#fdfdfd"/><stop offset="0.7" stop-color="#e4e4e4"/><stop offset="1" stop-color="#d0d0d0"/></radialGradient><radialGradient id="rd1" cx="40%" cy="30%" r="70%"><stop offset="0" stop-color="#d0f4ff"/><stop offset="0.5" stop-color="#36a4ea"/><stop offset="1" stop-color="#1470bd"/></radialGradient></defs><circle cx="6" cy="6" r="5.5" fill="url(#rb1)" stroke="#8e8f8f" stroke-width="1"/><circle cx="6" cy="6" r="2.8" fill="url(#rd1)" stroke="#183a62" stroke-width="1.1"/></svg>
<div class="t" style="left:477.50px;top:92px;font-size:12px;line-height:20px;transform:scaleX(0.8648);transform-origin:0 0;">Arachnida</div>
<svg class="a" style="left:600px;top:96px" width="12" height="12"><defs><radialGradient id="rb2" cx="40%" cy="35%" r="70%"><stop offset="0" stop-color="#fdfdfd"/><stop offset="0.7" stop-color="#e4e4e4"/><stop offset="1" stop-color="#d0d0d0"/></radialGradient><radialGradient id="rd2" cx="40%" cy="30%" r="70%"><stop offset="0" stop-color="#d0f4ff"/><stop offset="0.5" stop-color="#36a4ea"/><stop offset="1" stop-color="#1470bd"/></radialGradient></defs><circle cx="6" cy="6" r="5.5" fill="url(#rb2)" stroke="#8e8f8f" stroke-width="1"/></svg>
<div class="t" style="left:618.62px;top:92px;font-size:12px;line-height:20px;transform:scaleX(0.8814);transform-origin:0 0;">Linyphiidae</div>
<div class="cb" style="left:742px;top:94px"><i></i></div>
<svg class="a" style="left:742px;top:94px" width="13" height="13"><path d="M3.2 6.5 L5.3 9.6 L9.8 2.6" fill="none" stroke="#4a5f97" stroke-width="1.9"/></svg>
<div class="t" style="left:760.67px;top:91px;font-size:12px;line-height:20px;transform:scaleX(0.8320);transform-origin:0 0;">Summary</div>
<div class="t" style="left:386.59px;top:118px;font-size:12px;line-height:20px;word-spacing:1px;transform:scaleX(0.9075);transform-origin:0 0;">Lowest rank:</div>
<div class="tb" style="left:458px;top:116px;width:136px;height:21px;border-color:#abadb3 #dbdfe6 #e3e9ef #dbdfe6"></div>
<div class="t" style="left:461.00px;top:116px;font-size:11px;line-height:20px;letter-spacing:-0.200px;">genus</div>
<svg class="a" style="left:582px;top:125px" width="7" height="4"><polygon points="0,0 7,0 3.5,4" fill="#000"/></svg>
<div class="btn" style="left:743px;top:117px;width:73px;height:21px"></div>
<div class="t" style="left:751.65px;top:118px;font-size:12px;line-height:20px;word-spacing:1px;transform:scaleX(0.8548);transform-origin:0 0;">Start export</div>
<div class="a" style="left:384px;top:145px;width:417px;height:348px;background:#fff"></div>
<div class="sbv" style="left:800px;top:145px;width:17px;height:347px"></div>
<div class="thv" style="left:801px;top:163px;width:15px;height:17px"></div>
<div class="a" style="left:805px;top:167px;width:8px;height:1px;background:#505050"></div>
<div class="a" style="left:805px;top:170px;width:8px;height:1px;background:#505050"></div>
<div class="a" style="left:805px;top:173px;width:8px;height:1px;background:#505050"></div>
<svg class="a" style="left:0;top:0;overflow:visible" width="1" height="1"><defs><linearGradient id="ag5" x1="0" y1="1" x2="0" y2="0"><stop offset="0" stop-color="#1e1e1e"/><stop offset="1" stop-color="#7a7a7a"/></linearGradient></defs><polygon points="806,156 813,156 809.5,152" fill="url(#ag5)"/></svg>
<svg class="a" style="left:0;top:0;overflow:visible" width="1" height="1"><defs><linearGradient id="ag6" x1="0" y1="0" x2="0" y2="1"><stop offset="0" stop-color="#1e1e1e"/><stop offset="1" stop-color="#7a7a7a"/></linearGradient></defs><polygon points="806,483 813,483 809.5,487" fill="url(#ag6)"/></svg>
<div class="sbh" style="left:384px;top:493px;width:416px;height:17px"></div>
<div class="thh" style="left:402px;top:494px;width:242px;height:15px"></div>
<div class="a" style="left:519px;top:498px;width:1px;height:6px;background:#606060"></div>
<div class="a" style="left:522px;top:498px;width:1px;height:6px;background:#606060"></div>
<div class="a" style="left:525px;top:498px;width:1px;height:6px;background:#606060"></div>
<svg class="a" style="left:0;top:0;overflow:visible" width="1" height="1"><defs><linearGradient id="ag7" x1="1" y1="0" x2="0" y2="0"><stop offset="0" stop-color="#1e1e1e"/><stop offset="1" stop-color="#7a7a7a"/></linearGradient></defs><polygon points="393,498 393,505 389,501.5" fill="url(#ag7)"/></svg>
<svg class="a" style="left:0;top:0;overflow:visible" width="1" height="1"><defs><linearGradient id="ag8" x1="0" y1="0" x2="1" y2="0"><stop offset="0" stop-color="#1e1e1e"/><stop offset="1" stop-color="#7a7a7a"/></linearGradient></defs><polygon points="790,498 790,505 794,501.5" fill="url(#ag8)"/></svg>
<div class="t" style="left:463.50px;top:166px;font-size:19px;line-height:20px;font-weight:700;letter-spacing:0.250px;-webkit-text-stroke:0;">Arachnida</div>
<div class="t" style="left:474.50px;top:192px;font-size:16px;line-height:20px;font-weight:700;letter-spacing:-0.100px;-webkit-text-stroke:0;">Araneae</div>
<div class="t" style="left:484.00px;top:217px;font-size:14px;line-height:20px;font-weight:700;letter-spacing:0.360px;-webkit-text-stroke:0;">Linyphiidae</div>
<div class="t" style="left:493.30px;top:244px;font-size:13px;line-height:20px;font-weight:700;letter-spacing:0.217px;text-decoration:underline;text-decoration-skip-ink:none;-webkit-text-stroke:0;">Erigone</div>
<div class="t" style="left:493.30px;top:269px;font-size:13px;line-height:20px;font-weight:700;letter-spacing:0.150px;text-decoration:underline;text-decoration-skip-ink:none;-webkit-text-stroke:0;">Lepthyphantes</div>
<div class="t" style="left:493.30px;top:294px;font-size:13px;line-height:20px;font-weight:700;letter-spacing:0.343px;text-decoration:underline;text-decoration-skip-ink:none;-webkit-text-stroke:0;">Meioneta</div>
<div class="t" style="left:494.30px;top:319px;font-size:13px;line-height:20px;font-weight:700;letter-spacing:-0.020px;text-decoration:underline;text-decoration-skip-ink:none;-webkit-text-stroke:0;">Centromerus</div>
<div class="t" style="left:493.30px;top:344px;font-size:13px;line-height:20px;font-weight:700;letter-spacing:0.225px;text-decoration:underline;text-decoration-skip-ink:none;-webkit-text-stroke:0;">Microlinyphia</div>
<div class="t" style="left:493.30px;top:369px;font-size:13px;line-height:20px;font-weight:700;letter-spacing:0.350px;text-decoration:underline;text-decoration-skip-ink:none;-webkit-text-stroke:0;">Porrhomma</div>
<div class="t" style="left:494.30px;top:394px;font-size:13px;line-height:20px;font-weight:700;letter-spacing:0.409px;text-decoration:underline;text-decoration-skip-ink:none;-webkit-text-stroke:0;">Walckenaeria</div>
<div class="t" style="left:494.30px;top:419px;font-size:13px;line-height:20px;font-weight:700;letter-spacing:0.255px;text-decoration:underline;text-decoration-skip-ink:none;-webkit-text-stroke:0;">Tenuiphantes</div>
<div class="t" style="left:493.30px;top:444px;font-size:13px;line-height:20px;font-weight:700;letter-spacing:0.650px;text-decoration:underline;text-decoration-skip-ink:none;-webkit-text-stroke:0;">Neriene</div>
<div class="t" style="left:494.30px;top:469px;font-size:13px;line-height:20px;font-weight:700;letter-spacing:0.082px;text-decoration:underline;text-decoration-skip-ink:none;-webkit-text-stroke:0;">Abacoproeces</div>
<div class="t" style="left:402.16px;top:517px;font-size:12px;line-height:20px;word-spacing:1px;transform:scaleX(0.8429);transform-origin:0 0;">Export file:</div>
<div class="tb" style="left:455px;top:516px;width:362px;height:20px"></div>
<div class="a" style="left:456px;top:517px;width:360px;height:18px;overflow:hidden">
<div class="t" style="left:1.06px;top:0px;font-size:12px;line-height:20px;transform:scaleX(0.9382);transform-origin:0 0;">C:\Daten\Subversion\trunk\DiversityTaxonNames\bin\Debug\Export\Export</div>
</div></body></html>
